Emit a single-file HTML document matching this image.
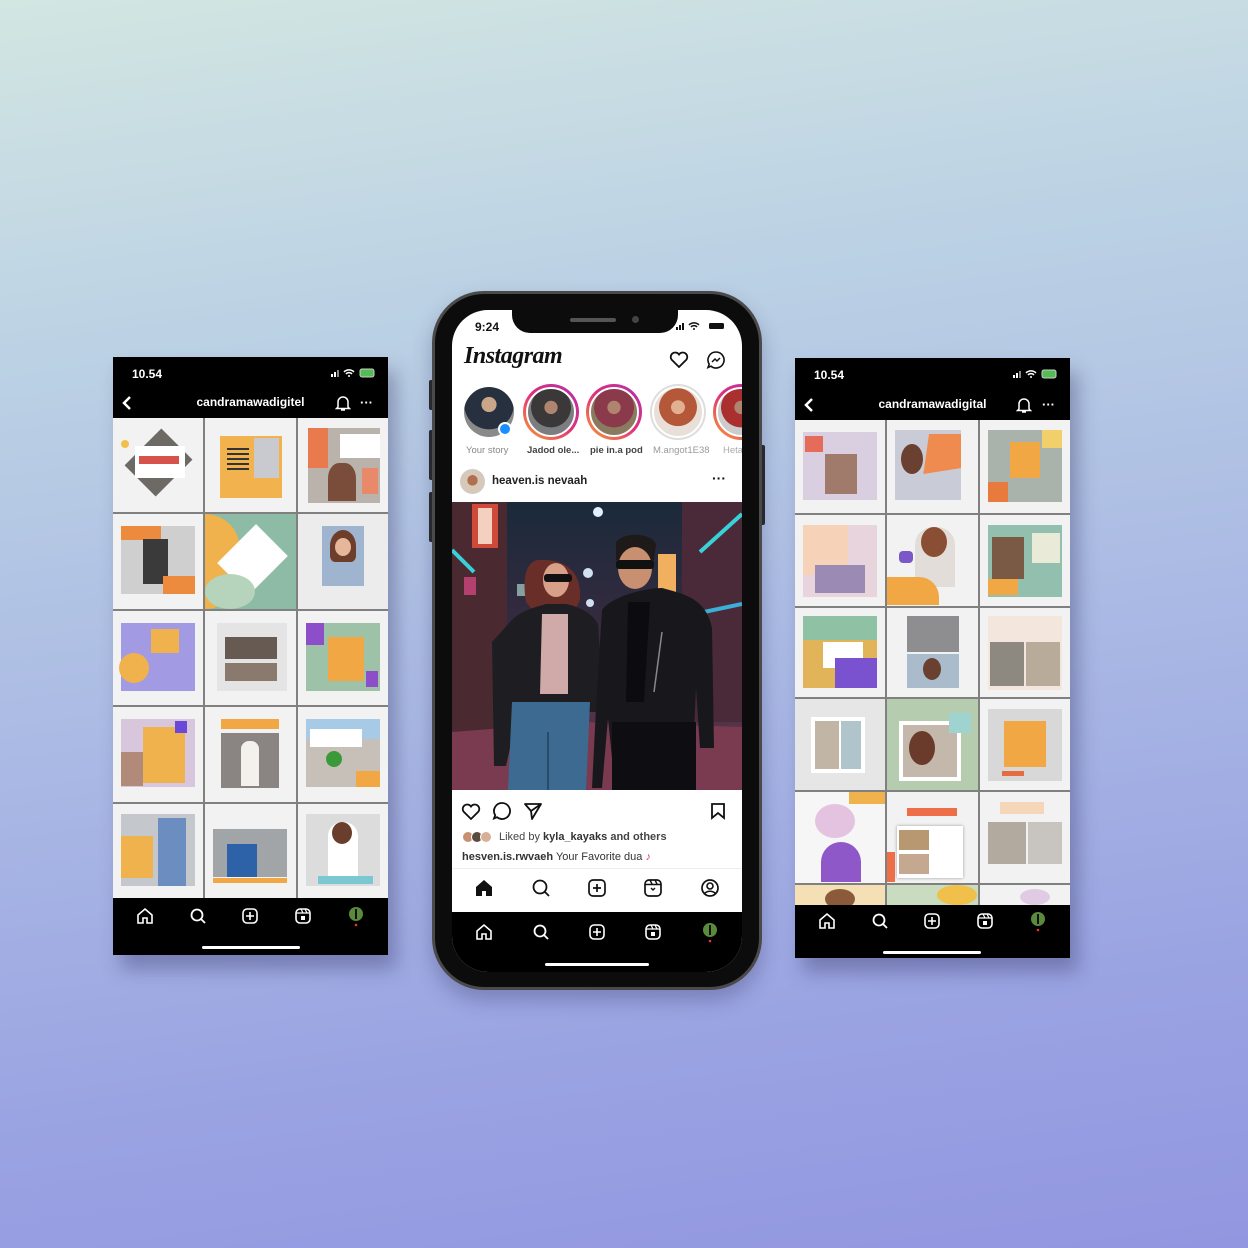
<!DOCTYPE html>
<html><head><meta charset="utf-8">
<style>
*{margin:0;padding:0;box-sizing:border-box}
body{width:1248px;height:1248px;overflow:hidden;position:relative;font-family:"Liberation Sans",sans-serif;
background:linear-gradient(172deg,#d2e6e2 0%,#bcd2e4 25%,#a9b8e4 55%,#9aa3e2 80%,#9296e0 100%)}
.side{position:absolute;background:#000;box-shadow:8px 14px 18px rgba(40,40,90,.35)}
.side .st{position:absolute;left:19px;top:10px;color:#fff;font-weight:bold;font-size:12px}
.side .ttl{position:absolute;left:0;right:0;top:38px;text-align:center;color:#fff;font-weight:bold;font-size:12px}
.grid{position:absolute;left:0;right:0;display:grid;grid-template-columns:1fr 1fr 1fr;gap:2px;background:#808080}
.t{background:#f2f2f2;position:relative;overflow:hidden}
.t i{position:absolute;display:block}
.nav{position:absolute;left:0;right:0;display:flex;justify-content:space-around;align-items:center}
.bar{position:absolute;height:3px;background:#fff;border-radius:2px}
.abs{position:absolute}
</style></head><body>

<!-- LEFT PHONE -->
<div class="side" style="left:113px;top:357px;width:275px;height:598px">
 <div class="st">10.54</div>
 <svg class="abs" style="left:218px;top:11px" width="46" height="10"><rect x="0" y="6" width="2" height="3" fill="#fff"/><rect x="3" y="4" width="2" height="5" fill="#fff"/><rect x="6" y="2" width="2" height="7" fill="#888"/><path d="M13 4a7 7 0 0 1 10 0M15 6a4 4 0 0 1 6 0" stroke="#fff" stroke-width="1.5" fill="none"/><circle cx="18" cy="8" r="1" fill="#fff"/><rect x="29" y="1" width="14" height="8" rx="2" fill="#5b5" stroke="#ccc"/></svg>
 <svg class="abs" style="left:8px;top:38px" width="12" height="16"><path d="M9 2L3 8l6 6" stroke="#fff" stroke-width="2.5" fill="none"/></svg>
 <div class="ttl">candramawadigitel</div>
 <svg class="abs" style="left:222px;top:37px" width="16" height="18"><path d="M3 13V8a5 5 0 0 1 10 0v5l1.5 1.5h-13z M6 16h4" stroke="#fff" stroke-width="1.5" fill="none"/></svg>
 <div class="abs" style="left:247px;top:38px;color:#fff;font-size:13px;font-weight:bold">···</div>
 <div class="grid" style="top:61px;height:480px;grid-template-rows:repeat(5,1fr)">
  <div class="t"><i style="left:18px;top:12px;width:55px;height:65px;background:#6d6a66;transform:rotate(45deg) scale(.8)"></i><i style="left:22px;top:28px;width:50px;height:32px;background:#fff"></i><i style="left:26px;top:38px;width:40px;height:8px;background:#d7524a"></i><i style="left:8px;top:22px;width:8px;height:8px;background:#f1c04a;border-radius:50%"></i></div>
  <div class="t"><i style="left:15px;top:18px;width:62px;height:62px;background:#f2b24e"></i><i style="left:49px;top:20px;width:25px;height:40px;background:#c9c9d0"></i><i style="left:22px;top:30px;width:22px;height:25px;background:repeating-linear-gradient(#333 0 2px,transparent 2px 5px)"></i></div>
  <div class="t"><i style="left:10px;top:10px;width:72px;height:75px;background:#b9b3ab"></i><i style="left:10px;top:10px;width:20px;height:40px;background:#e87a4e"></i><i style="left:42px;top:16px;width:40px;height:24px;background:#fff"></i><i style="left:30px;top:45px;width:28px;height:38px;background:#7a4c3a;border-radius:40% 40% 0 0"></i><i style="left:64px;top:50px;width:16px;height:26px;background:#e88a6a"></i></div>
  <div class="t"><i style="left:8px;top:12px;width:74px;height:68px;background:#cfcfcf"></i><i style="left:8px;top:12px;width:40px;height:14px;background:#ec8a3e"></i><i style="left:30px;top:25px;width:25px;height:45px;background:#3a3a3a"></i><i style="left:50px;top:62px;width:32px;height:18px;background:#ec8a3e"></i></div>
  <div class="t" style="background:#8dbba5"><i style="left:0;top:0;width:35px;height:95px;background:#f0b24d;border-radius:0 40px 40px 0"></i><i style="left:25px;top:18px;width:45px;height:55px;background:#fff;transform:rotate(45deg)"></i><i style="left:0;top:60px;width:50px;height:35px;background:#b6d3bb;border-radius:50%"></i></div>
  <div class="t" style="background:#ececec"><i style="left:24px;top:12px;width:42px;height:60px;background:#9fb5cf"></i><i style="left:32px;top:16px;width:26px;height:32px;background:#6d3e2a;border-radius:50% 50% 20% 20%"></i><i style="left:37px;top:24px;width:16px;height:18px;background:#e7b79c;border-radius:50%"></i></div>
  <div class="t"><i style="left:8px;top:12px;width:74px;height:68px;background:#a39ae4"></i><i style="left:38px;top:18px;width:28px;height:24px;background:#f0b24d"></i><i style="left:6px;top:42px;width:30px;height:30px;background:#f0b24d;border-radius:50%"></i></div>
  <div class="t"><i style="left:12px;top:12px;width:70px;height:68px;background:#e4e4e4"></i><i style="left:20px;top:26px;width:52px;height:22px;background:#665a52"></i><i style="left:20px;top:52px;width:52px;height:18px;background:#8a7a6e"></i></div>
  <div class="t"><i style="left:8px;top:12px;width:74px;height:68px;background:#9ec2a8"></i><i style="left:8px;top:12px;width:18px;height:22px;background:#8d4ec9"></i><i style="left:30px;top:26px;width:36px;height:44px;background:#f0a744"></i><i style="left:68px;top:60px;width:12px;height:16px;background:#8d4ec9"></i></div>
  <div class="t"><i style="left:8px;top:12px;width:74px;height:68px;background:#d8c6dc"></i><i style="left:30px;top:20px;width:42px;height:56px;background:#f0b24d"></i><i style="left:8px;top:45px;width:22px;height:34px;background:#b28a7a"></i><i style="left:62px;top:14px;width:12px;height:12px;background:#6a48d8"></i></div>
  <div class="t"><i style="left:16px;top:12px;width:58px;height:10px;background:#f0a744"></i><i style="left:16px;top:26px;width:58px;height:55px;background:#8a8482"></i><i style="left:36px;top:34px;width:18px;height:45px;background:#f4f0ec;border-radius:8px 8px 0 0"></i></div>
  <div class="t"><i style="left:8px;top:12px;width:74px;height:68px;background:#c7c0b8"></i><i style="left:8px;top:12px;width:74px;height:20px;background:#a7cbe6"></i><i style="left:12px;top:22px;width:52px;height:18px;background:#fff"></i><i style="left:28px;top:44px;width:16px;height:16px;background:#3a9a3a;border-radius:50%"></i><i style="left:58px;top:64px;width:24px;height:16px;background:#f0a744"></i></div>
  <div class="t"><i style="left:8px;top:10px;width:74px;height:72px;background:#c4c8cc"></i><i style="left:45px;top:14px;width:28px;height:68px;background:#6b8dc0"></i><i style="left:8px;top:32px;width:32px;height:42px;background:#f0b24d"></i></div>
  <div class="t"><i style="left:8px;top:25px;width:74px;height:48px;background:#a2a5a8"></i><i style="left:22px;top:40px;width:30px;height:33px;background:#2d62a8"></i><i style="left:8px;top:74px;width:74px;height:5px;background:#f0a744"></i></div>
  <div class="t"><i style="left:8px;top:10px;width:74px;height:72px;background:#dcdcdc"></i><i style="left:30px;top:18px;width:30px;height:60px;background:#fff;border-radius:14px 14px 0 0"></i><i style="left:34px;top:18px;width:20px;height:22px;background:#6a3e2c;border-radius:50%"></i><i style="left:20px;top:72px;width:55px;height:8px;background:#7cc7d4"></i></div>
 </div>
 <div class="nav" style="top:542px;height:34px;padding:0 6px">
  <svg width="18" height="18"><path d="M2 8L9 2l7 6v8h-5v-5H7v5H2z" stroke="#fff" stroke-width="1.6" fill="none"/></svg>
  <svg width="18" height="18"><circle cx="8" cy="8" r="5.5" stroke="#fff" stroke-width="1.8" fill="none"/><path d="M12 12l4 4" stroke="#fff" stroke-width="1.8"/></svg>
  <svg width="18" height="18"><rect x="2" y="2" width="14" height="14" rx="4" stroke="#fff" stroke-width="1.6" fill="none"/><path d="M9 5v8M5 9h8" stroke="#fff" stroke-width="1.6"/></svg>
  <svg width="18" height="18"><rect x="2" y="2" width="14" height="14" rx="4" stroke="#fff" stroke-width="1.6" fill="none"/><path d="M2 6h14M7 2l2 4M11 2l2 4" stroke="#fff" stroke-width="1.2"/><rect x="7" y="9" width="4" height="4" fill="#fff"/></svg>
  <svg width="18" height="22"><circle cx="9" cy="9" r="7" fill="#5a8a3a"/><path d="M9 4v10" stroke="#111" stroke-width="2"/><circle cx="9" cy="20" r="1.3" fill="#e33"/></svg>
 </div>
 <div class="bar" style="left:89px;top:589px;width:98px"></div>
</div>

<!-- RIGHT PHONE -->
<div class="side" style="left:795px;top:358px;width:275px;height:600px">
 <div class="st">10.54</div>
 <svg class="abs" style="left:218px;top:11px" width="46" height="10"><rect x="0" y="6" width="2" height="3" fill="#fff"/><rect x="3" y="4" width="2" height="5" fill="#fff"/><rect x="6" y="2" width="2" height="7" fill="#888"/><path d="M13 4a7 7 0 0 1 10 0M15 6a4 4 0 0 1 6 0" stroke="#fff" stroke-width="1.5" fill="none"/><circle cx="18" cy="8" r="1" fill="#fff"/><rect x="29" y="1" width="14" height="8" rx="2" fill="#5b5" stroke="#ccc"/></svg>
 <svg class="abs" style="left:8px;top:39px" width="12" height="16"><path d="M9 2L3 8l6 6" stroke="#fff" stroke-width="2.5" fill="none"/></svg>
 <div class="ttl" style="top:39px">candramawadigital</div>
 <svg class="abs" style="left:221px;top:38px" width="16" height="18"><path d="M3 13V8a5 5 0 0 1 10 0v5l1.5 1.5h-13z M6 16h4" stroke="#fff" stroke-width="1.5" fill="none"/></svg>
 <div class="abs" style="left:247px;top:39px;color:#fff;font-size:13px;font-weight:bold">···</div>
 <div class="grid" style="top:62px;height:485px;grid-template-rows:93px 91px 89px 91px 91px 1fr">
  <div class="t"><i style="left:8px;top:12px;width:74px;height:68px;background:#d9cfe0"></i><i style="left:10px;top:16px;width:18px;height:16px;background:#e56c5a"></i><i style="left:30px;top:34px;width:32px;height:40px;background:#a07a6a"></i></div>
  <div class="t"><i style="left:8px;top:10px;width:66px;height:70px;background:#c9ccd6"></i><i style="left:36px;top:14px;width:38px;height:40px;background:#ef8b4e;clip-path:polygon(15% 0,100% 0,100% 85%,0 100%)"></i><i style="left:14px;top:24px;width:22px;height:30px;background:#6a4030;border-radius:50%"></i></div>
  <div class="t"><i style="left:8px;top:10px;width:74px;height:72px;background:#aab3ab"></i><i style="left:30px;top:22px;width:30px;height:36px;background:#f0a744"></i><i style="left:8px;top:62px;width:20px;height:20px;background:#e87a3e"></i><i style="left:62px;top:10px;width:20px;height:18px;background:#f1cf6a"></i></div>
  <div class="t"><i style="left:8px;top:10px;width:74px;height:72px;background:#e8d4dc"></i><i style="left:8px;top:10px;width:45px;height:50px;background:#f6d2b8"></i><i style="left:20px;top:50px;width:50px;height:28px;background:#9a8ab4"></i></div>
  <div class="t"><i style="left:28px;top:12px;width:40px;height:60px;background:#e2ddd8;border-radius:18px 18px 0 0"></i><i style="left:34px;top:12px;width:26px;height:30px;background:#8a4e34;border-radius:50%"></i><i style="left:0;top:62px;width:52px;height:28px;background:#f0a744;border-radius:0 20px 0 0"></i><i style="left:12px;top:36px;width:14px;height:12px;background:#7a58c8;border-radius:4px"></i></div>
  <div class="t"><i style="left:8px;top:10px;width:74px;height:72px;background:#93bfae"></i><i style="left:12px;top:22px;width:32px;height:42px;background:#7a5a44"></i><i style="left:52px;top:18px;width:28px;height:30px;background:#e9ebd8"></i><i style="left:8px;top:64px;width:30px;height:16px;background:#f0a744"></i></div>
  <div class="t"><i style="left:8px;top:8px;width:74px;height:72px;background:#e2b45a"></i><i style="left:8px;top:8px;width:74px;height:24px;background:#8fc1a5"></i><i style="left:28px;top:34px;width:40px;height:26px;background:#fff"></i><i style="left:40px;top:50px;width:42px;height:30px;background:#7a52d0"></i></div>
  <div class="t"><i style="left:20px;top:8px;width:52px;height:36px;background:#8e8e90"></i><i style="left:20px;top:46px;width:52px;height:34px;background:#aabccc"></i><i style="left:36px;top:50px;width:18px;height:22px;background:#6a4030;border-radius:50%"></i></div>
  <div class="t"><i style="left:8px;top:8px;width:74px;height:74px;background:#f3e6dc"></i><i style="left:10px;top:34px;width:34px;height:44px;background:#8d8880"></i><i style="left:46px;top:34px;width:34px;height:44px;background:#b8ab9a"></i></div>
  <div class="t" style="background:#e6e6e6"><i style="left:16px;top:18px;width:54px;height:56px;background:#fff"></i><i style="left:20px;top:22px;width:24px;height:48px;background:#c1b5a6"></i><i style="left:46px;top:22px;width:20px;height:48px;background:#b0c4cc"></i></div>
  <div class="t" style="background:#b6ccae"><i style="left:12px;top:22px;width:62px;height:60px;background:#fff"></i><i style="left:16px;top:26px;width:54px;height:52px;background:#c4b8ac"></i><i style="left:22px;top:32px;width:26px;height:34px;background:#6a3a2a;border-radius:50%"></i><i style="left:62px;top:14px;width:22px;height:20px;background:#9ed3d0"></i></div>
  <div class="t"><i style="left:8px;top:10px;width:74px;height:72px;background:#d8d8d8"></i><i style="left:24px;top:22px;width:42px;height:46px;background:#f0a744"></i><i style="left:22px;top:72px;width:22px;height:5px;background:#e56c3e"></i></div>
  <div class="t" style="background:#f6f6f6"><i style="left:20px;top:12px;width:40px;height:34px;background:#e3c3df;border-radius:50%"></i><i style="left:26px;top:50px;width:40px;height:40px;background:#8e58c8;border-radius:20px 20px 0 0"></i><i style="left:54px;top:0;width:36px;height:12px;background:#f0b24d"></i></div>
  <div class="t"><i style="left:20px;top:16px;width:50px;height:8px;background:#ee6e4a"></i><i style="left:10px;top:34px;width:66px;height:52px;background:#fff;box-shadow:0 0 3px #999"></i><i style="left:12px;top:38px;width:30px;height:20px;background:#b89870"></i><i style="left:12px;top:62px;width:30px;height:20px;background:#c4a890"></i><i style="left:0;top:60px;width:8px;height:30px;background:#ee6e4a"></i></div>
  <div class="t"><i style="left:20px;top:10px;width:44px;height:12px;background:#f6d6b8"></i><i style="left:8px;top:30px;width:38px;height:42px;background:#b2aa9e"></i><i style="left:48px;top:30px;width:34px;height:42px;background:#c8c4c0"></i></div>
  <div class="t" style="background:#f4e0b4"><i style="left:30px;top:4px;width:30px;height:20px;background:#8a5a3a;border-radius:50%"></i></div>
  <div class="t" style="background:#c9dcc0"><i style="left:50px;top:0;width:40px;height:20px;background:#f0c04a;border-radius:50%"></i></div>
  <div class="t"><i style="left:40px;top:4px;width:30px;height:16px;background:#e0cbe4;border-radius:50%"></i></div>
 </div>
 <div class="nav" style="top:547px;height:32px;padding:0 6px">
  <svg width="18" height="18"><path d="M2 8L9 2l7 6v8h-5v-5H7v5H2z" stroke="#fff" stroke-width="1.6" fill="none"/></svg>
  <svg width="18" height="18"><circle cx="8" cy="8" r="5.5" stroke="#fff" stroke-width="1.8" fill="none"/><path d="M12 12l4 4" stroke="#fff" stroke-width="1.8"/></svg>
  <svg width="18" height="18"><rect x="2" y="2" width="14" height="14" rx="4" stroke="#fff" stroke-width="1.6" fill="none"/><path d="M9 5v8M5 9h8" stroke="#fff" stroke-width="1.6"/></svg>
  <svg width="18" height="18"><rect x="2" y="2" width="14" height="14" rx="4" stroke="#fff" stroke-width="1.6" fill="none"/><path d="M2 6h14M7 2l2 4M11 2l2 4" stroke="#fff" stroke-width="1.2"/><rect x="7" y="9" width="4" height="4" fill="#fff"/></svg>
  <svg width="18" height="22"><circle cx="9" cy="9" r="7" fill="#5a8a3a"/><path d="M9 4v10" stroke="#111" stroke-width="2"/><circle cx="9" cy="20" r="1.3" fill="#e33"/></svg>
 </div>
 <div class="bar" style="left:88px;top:593px;width:98px"></div>
</div>

<!-- CENTER PHONE -->
<div class="abs" style="left:429px;top:380px;width:5px;height:30px;background:#2a2a2a;border-radius:2px"></div>
<div class="abs" style="left:429px;top:430px;width:5px;height:50px;background:#2a2a2a;border-radius:2px"></div>
<div class="abs" style="left:429px;top:492px;width:5px;height:50px;background:#2a2a2a;border-radius:2px"></div>
<div class="abs" style="left:760px;top:445px;width:5px;height:80px;background:#2a2a2a;border-radius:2px"></div>
<div class="abs" style="left:432px;top:291px;width:330px;height:699px;background:#0c0c0c;border-radius:52px;border:3px solid #4a4a4a;box-shadow:0 10px 20px rgba(40,40,90,.3)"></div>
<div class="abs" style="left:452px;top:310px;width:290px;height:662px;background:#fff;border-radius:36px;overflow:hidden">
 <div class="abs" style="left:60px;top:0;width:166px;height:23px;background:#0c0c0c;border-radius:0 0 18px 18px"></div>
 <div class="abs" style="left:118px;top:8px;width:46px;height:4px;background:#555;border-radius:2px"></div>
 <div class="abs" style="left:180px;top:6px;width:7px;height:7px;background:#444;border-radius:50%"></div>
 <div class="abs" style="left:23px;top:10px;font-size:12px;font-weight:bold;color:#111">9:24</div>
 <svg class="abs" style="left:224px;top:11px" width="52" height="10"><rect x="0" y="6" width="2" height="3" fill="#111"/><rect x="3" y="4" width="2" height="5" fill="#111"/><rect x="6" y="2" width="2" height="7" fill="#111"/><path d="M13 4a7 7 0 0 1 10 0M15 6a4 4 0 0 1 6 0" stroke="#111" stroke-width="1.5" fill="none"/><circle cx="18" cy="8" r="1" fill="#111"/><rect x="33" y="2" width="15" height="6" rx="1.5" fill="#111"/></svg>
 <div class="abs" style="left:12px;top:33px;font-family:'Liberation Serif',serif;font-style:italic;font-size:24px;font-weight:bold;color:#111;letter-spacing:-0.5px">Instagram</div>
 <svg class="abs" style="left:217px;top:40px" width="20" height="18"><path d="M10 17L2.5 9.5a4.3 4.3 0 0 1 7.5-5 4.3 4.3 0 0 1 7.5 5z" stroke="#111" stroke-width="1.8" fill="none"/></svg>
 <svg class="abs" style="left:254px;top:40px" width="20" height="20"><path d="M10 2a8 8 0 1 1-5 14.2L2 17.5l1.2-3.3A8 8 0 0 1 10 2z" stroke="#111" stroke-width="1.6" fill="none"/><path d="M6 12l3-3 2 2 3-3" stroke="#111" stroke-width="1.5" fill="none"/></svg>
 <!-- stories -->
 <div class="abs" style="left:12px;top:77px;width:50px;height:50px;border-radius:50%;background:radial-gradient(circle at 50% 35%,#c9a58a 0 18%,#27303e 19% 60%,#8a8a88 61%)"></div>
 <div class="abs" style="left:46px;top:112px;width:14px;height:14px;border-radius:50%;background:#1a8fff;border:2px solid #fff"></div>
 <div class="abs" style="left:71px;top:74px;width:56px;height:56px;border-radius:50%;background:linear-gradient(40deg,#f9a030,#e0307a,#b030b0);padding:3px"><div style="width:100%;height:100%;border-radius:50%;border:2px solid #fff;background:radial-gradient(circle at 50% 40%,#b08570 0 18%,#3a3838 19% 55%,#7b7d80 56%)"></div></div>
 <div class="abs" style="left:134px;top:74px;width:56px;height:56px;border-radius:50%;background:linear-gradient(40deg,#f9a030,#e0307a,#b030b0);padding:3px"><div style="width:100%;height:100%;border-radius:50%;border:2px solid #fff;background:radial-gradient(circle at 50% 40%,#b08570 0 18%,#8a3a4a 19% 55%,#8a7a60 56%)"></div></div>
 <div class="abs" style="left:198px;top:74px;width:56px;height:56px;border-radius:50%;background:#ddd;padding:2px"><div style="width:100%;height:100%;border-radius:50%;border:2px solid #fff;background:radial-gradient(circle at 50% 40%,#e0b090 0 18%,#b5583a 19% 50%,#e8e0d8 51%)"></div></div>
 <div class="abs" style="left:261px;top:74px;width:56px;height:56px;border-radius:50%;background:linear-gradient(40deg,#f9a030,#e0307a,#b030b0);padding:3px"><div style="width:100%;height:100%;border-radius:50%;border:2px solid #fff;background:radial-gradient(circle at 50% 40%,#b08570 0 18%,#aa3030 19% 55%,#ccc 56%)"></div></div>
 <div class="abs" style="top:135px;left:0;width:300px;font-size:9.5px;color:#222;white-space:nowrap">
  <span class="abs" style="left:14px;color:#888">Your story</span><span class="abs" style="left:75px;font-weight:bold;color:#444">Jadod ole...</span><span class="abs" style="left:138px;font-weight:bold;color:#444">pie in.a pod</span><span class="abs" style="left:201px;color:#999">M.angot1E38</span><span class="abs" style="left:271px;color:#aaa">Heta</span>
 </div>
 <div class="abs" style="left:8px;top:159px;width:25px;height:25px;border-radius:50%;background:radial-gradient(circle at 50% 45%,#b07050 0 30%,#d8c8b8 31%);border:1px solid #ccc"></div>
 <div class="abs" style="left:40px;top:165px;font-size:11.5px;font-weight:bold;color:#222">heaven.is nevaah</div>
 <div class="abs" style="left:260px;top:160px;font-size:14px;font-weight:bold;color:#111">···</div>
 <!-- photo -->
 <svg class="abs" style="left:0;top:192px" width="290" height="288" viewBox="0 0 290 288">
  <defs><linearGradient id="g" x1="0" y1="0" x2="0" y2="1"><stop offset="0" stop-color="#1a2a3a"/><stop offset=".5" stop-color="#3a2a40"/><stop offset="1" stop-color="#6a3a50"/></linearGradient></defs>
  <rect width="290" height="288" fill="url(#g)"/>
  <rect x="0" y="0" width="55" height="230" fill="#4a2a30"/>
  <rect x="20" y="2" width="26" height="44" fill="#d04a3a"/><rect x="26" y="6" width="14" height="36" fill="#f3d0c0"/>
  <rect x="230" y="0" width="60" height="220" fill="#4a2a38"/>
  <path d="M0 48l22 22" stroke="#3ad0d8" stroke-width="4"/>
  <path d="M248 50l42-38" stroke="#3ad0d8" stroke-width="4"/><path d="M252 110l38-8" stroke="#3ab0d8" stroke-width="4"/>
  <rect x="206" y="52" width="18" height="38" fill="#f0b060"/>
  <circle cx="146" cy="10" r="5" fill="#e0f0ff"/><circle cx="136" cy="71" r="5" fill="#d0e0f0"/><circle cx="138" cy="101" r="4" fill="#d0e0f0"/>
  <rect x="12" y="75" width="12" height="18" fill="#e04a8a" opacity=".7"/><rect x="65" y="82" width="16" height="12" fill="#c0f0e0" opacity=".6"/>
  <path d="M0 288V230l130-10 160 5v63z" fill="#7a3a50"/>
  <!-- woman -->
  <path d="M86 58c-12 2-16 18-12 42l8 10c10-5 30-5 40 0l6-12c2-24-10-42-42-40z" fill="#6a2e28"/>
  <ellipse cx="104" cy="78" rx="13" ry="17" fill="#d8a088"/>
  <rect x="92" y="72" width="28" height="8" rx="3" fill="#111"/>
  <path d="M58 120c10-12 30-16 36-18h20c10 2 26 8 32 20l4 60-14 30H70l-12-30z" fill="#1e1e22"/>
  <path d="M40 140l18-20 8 90-12 54H42z" fill="#1e1e22"/>
  <path d="M130 130l15 20v60h-14z" fill="#1e1e22"/>
  <path d="M90 112h26v80H88z" fill="#cfaaa8"/>
  <path d="M60 200h78l-4 88H56z" fill="#3d6a90"/><path d="M96 230v58" stroke="#2a4a66" stroke-width="2"/>
  <!-- man -->
  <path d="M164 40c8-10 34-10 40 2l-2 16h-38z" fill="#1e1a1a"/>
  <ellipse cx="183" cy="66" rx="17" ry="21" fill="#c89070"/>
  <rect x="164" y="58" width="38" height="9" rx="3" fill="#111"/>
  <path d="M150 108c10-14 44-22 60-22 22 6 44 10 50 40l2 120h-14l-4-60-4 90H162l-6-60-6 70h-10l4-80z" fill="#18181c"/>
  <path d="M176 100h22l-6 100h-18z" fill="#0c0c10"/>
  <rect x="160" y="220" width="84" height="68" fill="#0e0e12"/>
  <path d="M210 130l-8 60" stroke="#888" stroke-width="1.5"/>
 </svg>
 <!-- actions -->
 <svg class="abs" style="left:9px;top:492px" width="20" height="18"><path d="M10 17L2.5 9.5a4.3 4.3 0 0 1 7.5-5 4.3 4.3 0 0 1 7.5 5z" stroke="#111" stroke-width="1.8" fill="none"/></svg>
 <svg class="abs" style="left:40px;top:491px" width="20" height="20"><path d="M10 2a8 8 0 1 1-5 14.2L2 17.5l1.2-3.3A8 8 0 0 1 10 2z" stroke="#111" stroke-width="1.8" fill="none"/></svg>
 <svg class="abs" style="left:71px;top:491px" width="20" height="20"><path d="M2 3h16L9 18l-1-8z M8 10l10-7" stroke="#111" stroke-width="1.8" fill="none" stroke-linejoin="round"/></svg>
 <svg class="abs" style="left:258px;top:492px" width="16" height="18"><path d="M2 2h12v14l-6-5-6 5z" stroke="#111" stroke-width="1.8" fill="none"/></svg>
 <div class="abs" style="left:10px;top:521px;width:34px;height:12px">
  <span class="abs" style="left:0;width:12px;height:12px;border-radius:50%;background:#c89070;border:1px solid #fff"></span><span class="abs" style="left:9px;width:12px;height:12px;border-radius:50%;background:#5a4a40;border:1px solid #fff"></span><span class="abs" style="left:18px;width:12px;height:12px;border-radius:50%;background:#d8b098;border:1px solid #fff"></span>
 </div>
 <div class="abs" style="left:47px;top:521px;font-size:11px;color:#444">Liked by <b style="color:#333">kyla_kayaks</b> <b style="color:#444">and others</b></div>
 <div class="abs" style="left:10px;top:541px;font-size:11px;color:#333"><b>hesven.is.rwvaeh</b> Your Favorite dua <span style="color:#d83a8a">♪</span></div>
 <div class="abs" style="left:0;top:558px;width:290px;height:1px;background:#eee"></div>
 <div class="nav" style="top:566px;height:24px;padding:0 4px">
  <svg width="20" height="20"><path d="M2 9L10 2l8 7v9h-6v-5H8v5H2z" fill="#111"/></svg>
  <svg width="20" height="20"><circle cx="9" cy="9" r="6.5" stroke="#111" stroke-width="1.8" fill="none"/><path d="M14 14l4 4" stroke="#111" stroke-width="1.8"/></svg>
  <svg width="20" height="20"><rect x="2" y="2" width="16" height="16" rx="4" stroke="#111" stroke-width="1.7" fill="none"/><path d="M10 6v8M6 10h8" stroke="#111" stroke-width="1.7"/></svg>
  <svg width="20" height="20"><rect x="2" y="2" width="16" height="16" rx="4" stroke="#111" stroke-width="1.7" fill="none"/><path d="M2 6.5h16M7 2l2 4M12 2l2 4M8 10l2 2 2-2" stroke="#111" stroke-width="1.4" fill="none"/></svg>
  <svg width="20" height="20"><circle cx="10" cy="10" r="8" stroke="#111" stroke-width="1.7" fill="none"/><circle cx="10" cy="8" r="3" stroke="#111" stroke-width="1.6" fill="none"/><path d="M4.5 15.5c3-3 8-3 11 0" stroke="#111" stroke-width="1.6" fill="none"/></svg>
 </div>
 <div class="abs" style="left:0;top:602px;width:290px;height:60px;background:#000">
  <div class="nav" style="top:9px;height:22px;padding:0 4px">
   <svg width="18" height="18"><path d="M2 8L9 2l7 6v8h-5v-5H7v5H2z" stroke="#fff" stroke-width="1.6" fill="none"/></svg>
   <svg width="18" height="18"><circle cx="8" cy="8" r="5.5" stroke="#fff" stroke-width="1.8" fill="none"/><path d="M12 12l4 4" stroke="#fff" stroke-width="1.8"/></svg>
   <svg width="18" height="18"><rect x="2" y="2" width="14" height="14" rx="4" stroke="#fff" stroke-width="1.6" fill="none"/><path d="M9 5v8M5 9h8" stroke="#fff" stroke-width="1.6"/></svg>
   <svg width="18" height="18"><rect x="2" y="2" width="14" height="14" rx="4" stroke="#fff" stroke-width="1.6" fill="none"/><path d="M2 6h14M7 2l2 4M11 2l2 4" stroke="#fff" stroke-width="1.2"/><rect x="7" y="9" width="4" height="4" fill="#fff"/></svg>
   <svg width="18" height="22"><circle cx="9" cy="9" r="7" fill="#5a8a3a"/><path d="M9 4v10" stroke="#111" stroke-width="2"/><circle cx="9" cy="20" r="1.3" fill="#e33"/></svg>
  </div>
  <div class="bar" style="left:93px;top:51px;width:104px"></div>
 </div>
</div>
</body></html>
